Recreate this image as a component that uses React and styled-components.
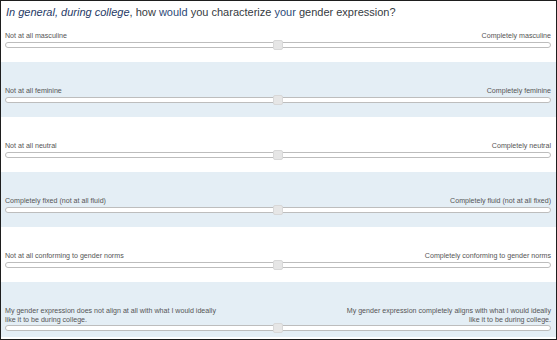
import React from "react";
import styled, { createGlobalStyle } from "styled-components";

const Global = createGlobalStyle`
  html, body { margin: 0; padding: 0; background: #fff; }
  body { width: 557px; height: 340px; overflow: hidden; font-family: "Liberation Sans", Arial, sans-serif; }
`;

const Frame = styled.div`
  box-sizing: border-box;
  width: 557px;
  height: 340px;
  border: 1px solid #1e1e1e;
  background: #fff;
  overflow: hidden;
  display: flex;
  flex-direction: column;
`;

const Title = styled.div`
  box-sizing: border-box;
  height: 25px;
  padding: 5px 0 0 5px;
  font-size: 11px;
  line-height: 13px;
  color: #363b42;
`;

const Em = styled.em`
  color: #1f3a66;
`;

const Hi = styled.span`
  color: #2c4a78;
`;

const Row = styled.div`
  box-sizing: border-box;
  height: ${(p) => (p.$first ? "36px" : "55px")};
  padding: ${(p) => (p.$first ? "6px" : "25px")} 5px 0 4px;
  background: ${(p) => (p.$alt ? "#e4eef5" : "#fff")};
  display: flex;
  flex-direction: column;
  flex-shrink: 0;
`;

const Labels = styled.div`
  display: flex;
  justify-content: space-between;
  align-items: flex-end;
  font-size: 7.1px;
  line-height: 8.5px;
  color: #555;
  margin-bottom: 1px;
`;

const Left = styled.span`
  text-align: left;
`;

const Right = styled.span`
  text-align: right;
`;

const Track = styled.div`
  position: relative;
  box-sizing: border-box;
  height: 6px;
  border: 1px solid #bdbdbd;
  border-radius: 3px;
  background: #fff;
`;

const Thumb = styled.div`
  position: absolute;
  box-sizing: border-box;
  left: 50%;
  top: -3px;
  width: 10px;
  height: 10px;
  margin-left: -5px;
  background: #e6e6e6;
  border: 1px solid #d8d8d8;
  border-radius: 2px;
`;

const items = [
  { l: "Not at all masculine", r: "Completely masculine" },
  { l: "Not at all feminine", r: "Completely feminine" },
  { l: "Not at all neutral", r: "Completely neutral" },
  { l: "Completely fixed (not at all fluid)", r: "Completely fluid (not at all fixed)" },
  { l: "Not at all conforming to gender norms", r: "Completely conforming to gender norms" },
  {
    l: ["My gender expression does not align at all with what I would ideally", "like it to be during college."],
    r: ["My gender expression completely aligns with what I would ideally", "like it to be during college."],
  },
];

const renderText = (t) =>
  Array.isArray(t) ? (
    <>
      {t[0]}
      <br />
      {t[1]}
    </>
  ) : (
    t
  );

export default function App() {
  return (
    <>
      <Global />
      <Frame>
        <Title>
          <Em>In general, during college</Em>, how <Hi>would</Hi> you characterize <Hi>your</Hi> gender expression?
        </Title>
        {items.map((it, i) => (
          <Row key={i} $first={i === 0} $alt={i % 2 === 1}>
            <Labels>
              <Left>{renderText(it.l)}</Left>
              <Right>{renderText(it.r)}</Right>
            </Labels>
            <Track>
              <Thumb />
            </Track>
          </Row>
        ))}
      </Frame>
    </>
  );
}
